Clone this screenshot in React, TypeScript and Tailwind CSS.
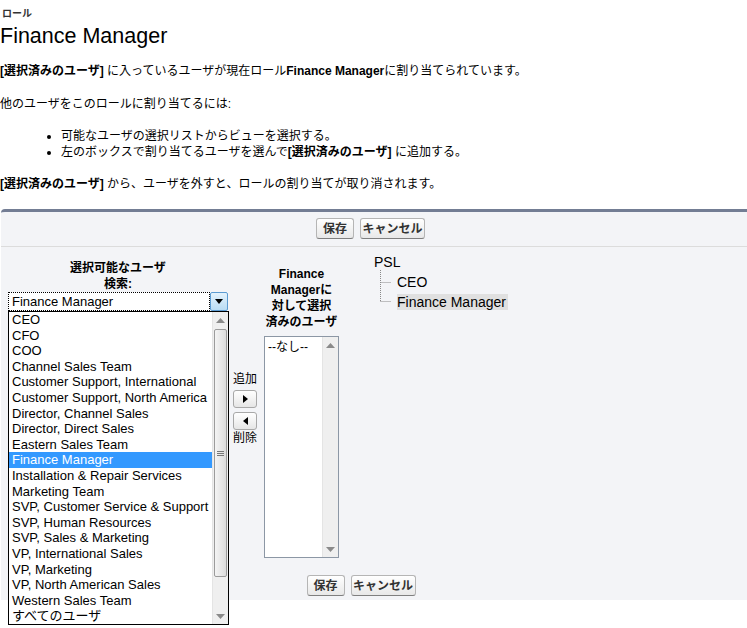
const roles = [
  'CEO',
  'CFO',
  'COO',
  'Channel Sales Team',
  'Customer Support, International',
  'Customer Support, North America',
  'Director, Channel Sales',
  'Director, Direct Sales',
  'Eastern Sales Team',
  'Finance Manager',
  'Installation & Repair Services',
  'Marketing Team',
  'SVP, Customer Service & Support',
  'SVP, Human Resources',
  'SVP, Sales & Marketing',
  'VP, International Sales',
  'VP, Marketing',
  'VP, North American Sales',
  'Western Sales Team',
  'すべてのユーザ',
]

function Btn({ label, w }: { label: string; w: string }) {
  return (
    <button
      className={`${w} h-[21px] rounded-[3px] border border-[#b5b5b5] border-b-[#7f7f7f] bg-gradient-to-b from-white to-[#e8e8e8] text-[12px] font-bold leading-none text-[#333]`}
    >
      {label}
    </button>
  )
}

function ButtonRow({ pr }: { pr: string }) {
  return (
    <div className={`flex justify-center gap-[6px] ${pr}`}>
      <Btn label="保存" w="w-[38px]" />
      <Btn label="キャンセル" w="w-[65px]" />
    </div>
  )
}

function Arrow({ dir }: { dir: 'up' | 'down' }) {
  return (
    <svg width="9" height="5" viewBox="0 0 9 5">
      {dir === 'up' ? <path d="M4.5 0 L9 5 L0 5 Z" fill="#8a8a8a" /> : <path d="M0 0 L9 0 L4.5 5 Z" fill="#8a8a8a" />}
    </svg>
  )
}

function Scrollbar({ thumb }: { thumb: boolean }) {
  return (
    <div className="flex w-[16px] flex-col border-l border-[#e4e4e4] bg-[#efefef]">
      <div className="flex h-[16px] items-center justify-center">
        <Arrow dir="up" />
      </div>
      <div className="flex flex-1 flex-col px-[1px]">
        {thumb && (
          <div className="mt-[1px] flex h-[248px] items-center justify-center rounded-[2px] border border-[#9b9b9b] bg-gradient-to-r from-[#f4f4f4] to-[#dcdcdc]">
            <div className="flex flex-col gap-[1px]">
              <div className="h-px w-[7px] bg-[#777]" />
              <div className="h-px w-[7px] bg-[#777]" />
              <div className="h-px w-[7px] bg-[#777]" />
            </div>
          </div>
        )}
      </div>
      <div className="flex h-[16px] items-center justify-center">
        <Arrow dir="down" />
      </div>
    </div>
  )
}

export default function App() {
  return (
    <div className="min-h-[628px] bg-white font-['Liberation_Sans','Noto_Sans_CJK_JP',sans-serif] text-black">
      <div className="pt-[8px] pl-[2px] text-[10px] font-bold leading-[12px] text-[#333]">ロール</div>
      <h1 className="mt-[4px] text-[21.5px] leading-[24px]">Finance Manager</h1>

      <div className="text-[12px] leading-[16px]">
        <p className="mt-[15px]">
          <b>[選択済みのユーザ]</b> に入っているユーザが現在ロール<b>Finance Manager</b>に割り当てられています。
        </p>
        <p className="mt-[17px]">他のユーザをこのロールに割り当てるには:</p>
        <ul className="mt-[16px] list-disc pl-[61px]">
          <li>可能なユーザの選択リストからビューを選択する。</li>
          <li>
            左のボックスで割り当てるユーザを選んで<b>[選択済みのユーザ]</b> に追加する。
          </li>
        </ul>
        <p className="mt-[16px]">
          <b>[選択済みのユーザ]</b> から、ユーザを外すと、ロールの割り当てが取り消されます。
        </p>
      </div>

      <div className="mt-[17px] ml-px h-[391px] rounded-tl-[4px] border-t-[3px] border-[#737d94] bg-[#f3f4f7]">
        <div className="border-b border-[#dcdcdc] pt-[6px] pb-[7px]">
          <ButtonRow pr="pr-[7px]" />
        </div>

        <div className="flex items-start pl-[7px] text-[12px] leading-[16px]">
          {/* available users */}
          <div className="relative mt-[13px] w-[220px]">
            <div className="text-center font-bold">
              選択可能なユーザ
              <br />
              検索:
            </div>
            <div className="flex h-[19px] bg-white">
              <div className="flex flex-1 items-center border border-dotted border-black pl-[3px] text-[13px]">
                Finance Manager
              </div>
              <div className="flex w-[18px] items-center justify-center rounded-[2px] border border-[#5c9bd1] bg-gradient-to-b from-[#e3f2fc] to-[#b9dcf4]">
                <svg width="8" height="5" viewBox="0 0 8 5">
                  <path d="M0 0 L8 0 L4 5 Z" fill="#000" />
                </svg>
              </div>
            </div>
            <div className="absolute top-[51px] left-0 z-10 flex h-[314px] w-[221px] border border-black bg-white">
              <ul className="flex-1 text-[13px]">
                {roles.map((r) => (
                  <li
                    key={r}
                    className={`h-[15.6px] truncate pl-[3px] leading-[15.6px] ${
                      r === 'Finance Manager' ? 'bg-[#3399ff] text-white' : ''
                    }`}
                  >
                    {r}
                  </li>
                ))}
              </ul>
              <Scrollbar thumb />
            </div>
          </div>

          {/* add / remove */}
          <div className="mt-[124px] ml-[5px] flex w-[25px] flex-col items-start">
            <div className="text-[12px]">追加</div>
            <button className="mt-[3px] flex h-[18px] w-[24px] items-center justify-center rounded-[3px] border border-[#a8a8a8] bg-gradient-to-b from-white to-[#e6e6e6]">
              <svg width="5" height="8" viewBox="0 0 5 8">
                <path d="M0 0 L5 4 L0 8 Z" fill="#000" />
              </svg>
            </button>
            <button className="mt-[4px] flex h-[18px] w-[24px] items-center justify-center rounded-[3px] border border-[#a8a8a8] bg-gradient-to-b from-white to-[#e6e6e6]">
              <svg width="5" height="8" viewBox="0 0 5 8">
                <path d="M5 0 L0 4 L5 8 Z" fill="#000" />
              </svg>
            </button>
            <div className="text-[12px]">削除</div>
          </div>

          {/* selected users */}
          <div className="mt-[19px] ml-[6px] w-[75px]">
            <div className="text-center font-bold leading-[16px]">
              Finance
              <br />
              Managerに
              <br />
              対して選択
              <br />
              済みのユーザ
            </div>
            <div className="mt-[6px] flex h-[222px] border border-[#8c97a5] bg-white">
              <div className="flex-1 pt-[2px] pl-[3px] text-[12px]">--なし--</div>
              <Scrollbar thumb={false} />
            </div>
          </div>

          {/* role tree */}
          <div className="mt-[7px] ml-[35px] text-[14px] leading-[16px]">
            <div>PSL</div>
            <div className="flex">
              <svg width="23" height="40" viewBox="0 0 23 40" className="shrink-0">
                <g stroke="#888" strokeWidth="1" strokeDasharray="1 1">
                  <line x1="6.5" y1="0" x2="6.5" y2="32" />
                  <line x1="6.5" y1="12.5" x2="17" y2="12.5" />
                  <line x1="6.5" y1="31.5" x2="17" y2="31.5" />
                </g>
              </svg>
              <div className="flex flex-col">
                <div className="mt-[4px]">CEO</div>
                <div className="mt-[4px] bg-[#e0e0e0] pr-[2px]">Finance Manager</div>
              </div>
            </div>
          </div>
        </div>

        <div className="mt-[17px]">
          <ButtonRow pr="pr-[26px]" />
        </div>
      </div>
    </div>
  )
}
